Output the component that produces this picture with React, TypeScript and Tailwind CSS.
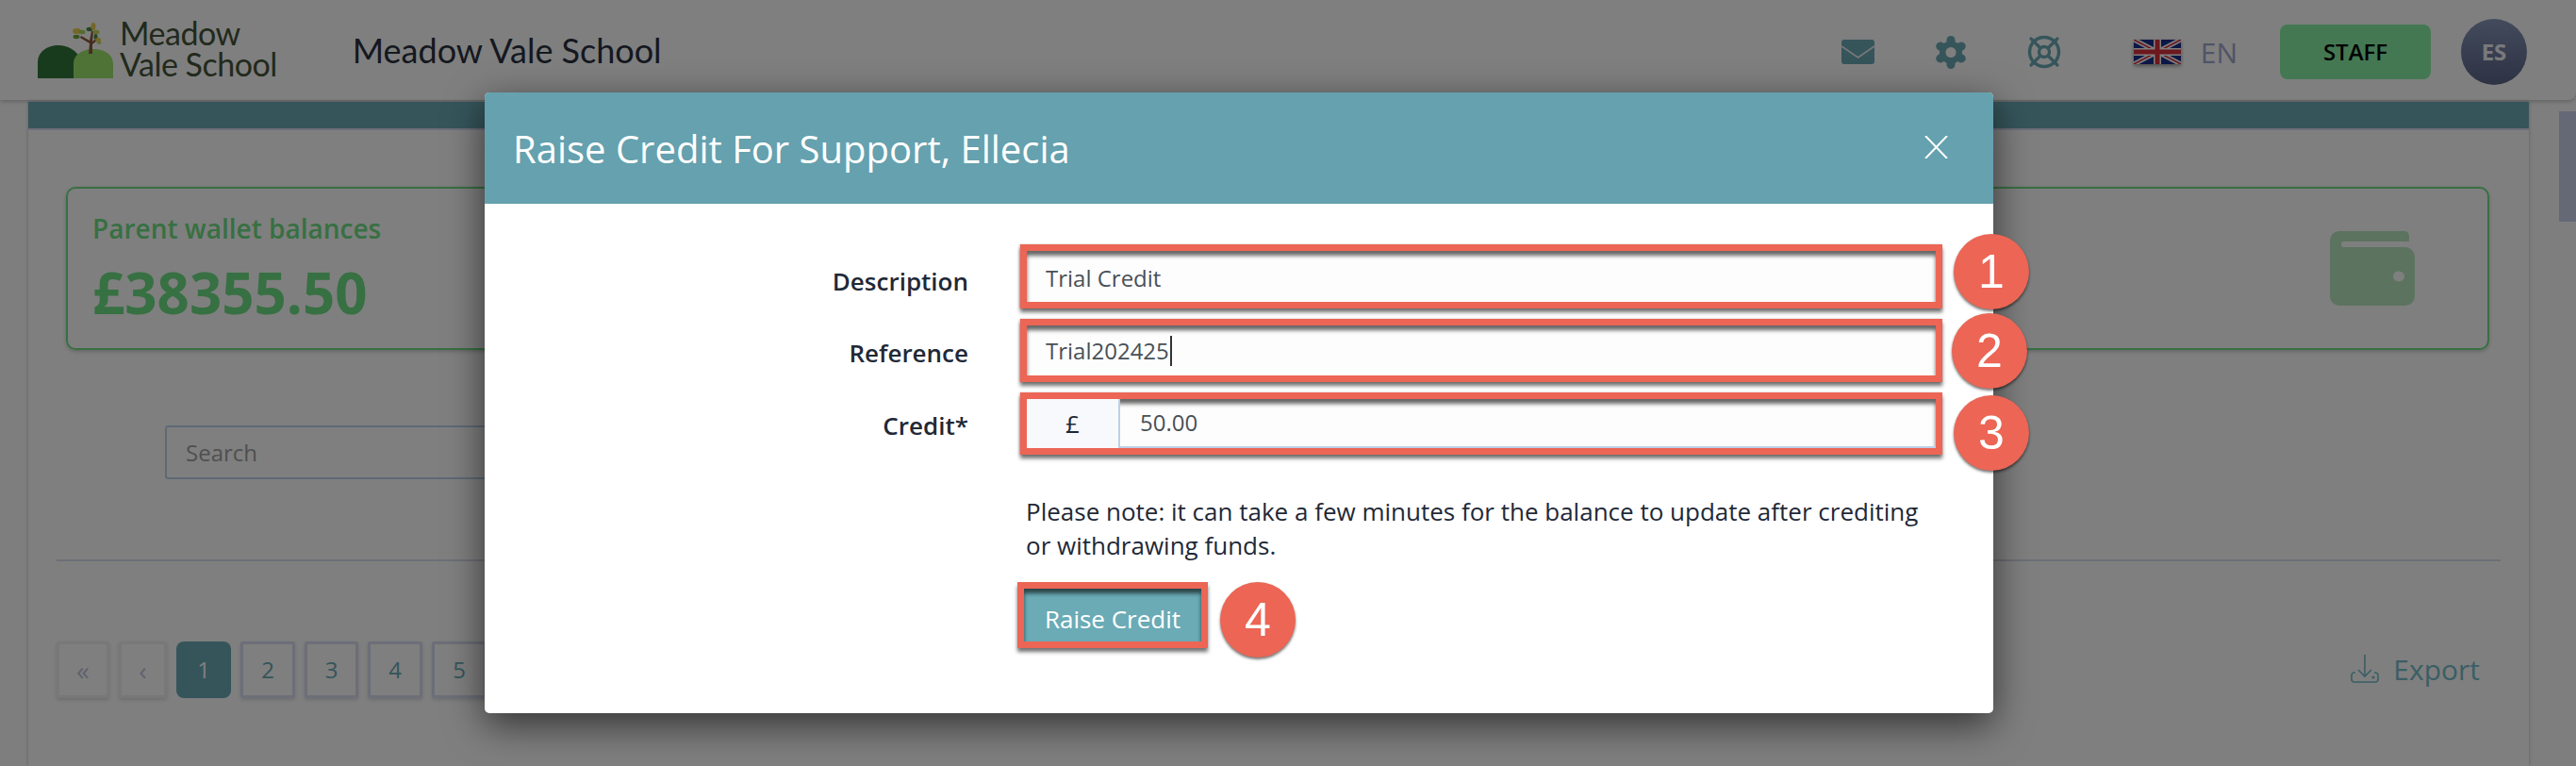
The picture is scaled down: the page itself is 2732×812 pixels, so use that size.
import React from "react";

function Logo() {
  return (
    <svg width="80" height="61" viewBox="0 0 80 61" className="mt-[22px] shrink-0 self-start">
      <path d="M0 61 V44 C0 33 10 26 22 26 C32 26 40 31 44 38 L44 61 Z" fill="#33773a" />
      <path d="M38 61 V45 C38 36 48 30 59 30 C71 30 80 36 80 46 V61 Z" fill="#9fe56f" />
      <path d="M54 35 L55 24 L45 18 L46 16 L55 21 L57 11 L59 11 L58 22 L63 18 L64 20 L58 25 L58 35 Z" fill="#8a5a3a" />
      <ellipse cx="41.5" cy="11" rx="4.5" ry="3" fill="#e8cf4e" />
      <ellipse cx="47" cy="12" rx="3.5" ry="2.2" fill="#a8d85a" />
      <ellipse cx="41" cy="17" rx="3.5" ry="2.2" fill="#6ea83e" />
      <ellipse cx="55" cy="9" rx="3.5" ry="2.2" fill="#4a8a4a" />
      <ellipse cx="59" cy="6" rx="2.5" ry="4" fill="#e8cf4e" />
      <ellipse cx="62" cy="12" rx="3.5" ry="2.2" fill="#c9d860" />
      <ellipse cx="61.5" cy="17" rx="2" ry="3" fill="#4a8a4a" />
      <ellipse cx="64" cy="20" rx="3" ry="2" fill="#e8cf4e" />
      <ellipse cx="65" cy="23" rx="2.5" ry="2" fill="#c9d860" />
    </svg>
  );
}

function Flag() {
  return (
    <svg width="50" height="26" viewBox="0 0 50 26" className="drop-shadow-[0_2px_2px_rgba(0,0,0,0.4)]">
      <rect width="50" height="26" fill="#1a2f8c" />
      <path d="M0 0 L50 26 M50 0 L0 26" stroke="#ffffff" strokeWidth="5" />
      <path d="M0 0 L50 26 M50 0 L0 26" stroke="#d8303c" strokeWidth="1.6" />
      <path d="M25 0 V26 M0 13 H50" stroke="#ffffff" strokeWidth="8" />
      <path d="M25 0 V26 M0 13 H50" stroke="#d8303c" strokeWidth="5" />
    </svg>
  );
}

function Envelope() {
  return (
    <svg width="35" height="26" viewBox="0 0 35 26">
      <rect width="35" height="26" rx="3" fill="#6aaab6" />
      <path d="M0 7 L17.5 19 L35 7" fill="none" stroke="#f0f0f0" strokeWidth="1.8" />
    </svg>
  );
}

function Gear() {
  return (
    <svg width="34" height="35" viewBox="0 0 34 35">
      <circle cx="17" cy="17.5" r="12" fill="#6aaab6" />
      <g stroke="#6aaab6" strokeWidth="9" strokeLinecap="round">
        <path d="M17 17.5 V4.5" />
        <path d="M17 17.5 V30.5" />
        <path d="M17 17.5 L28.2 11" />
        <path d="M17 17.5 L5.8 24" />
        <path d="M17 17.5 L28.2 24" />
        <path d="M17 17.5 L5.8 11" />
      </g>
      <circle cx="17" cy="17.5" r="5.5" fill="#ffffff" />
    </svg>
  );
}

function LifeRing() {
  return (
    <svg width="36" height="36" viewBox="0 0 36 36" fill="none" stroke="#6aaab6">
      <circle cx="18" cy="18" r="15.5" strokeWidth="3.4" />
      <path d="M4 4 L32 32 M32 4 L4 32" strokeWidth="3.2" strokeLinecap="round" />
      <circle cx="18" cy="18" r="5.5" fill="#ffffff" strokeWidth="3.4" />
    </svg>
  );
}

function Wallet() {
  return (
    <svg width="90" height="79" viewBox="0 0 90 79">
      <path
        d="M10 0 H79 a5 5 0 0 1 5 5 V11 H15 a3 3 0 0 0 0 6 H80 a10 10 0 0 1 10 10 V69 a10 10 0 0 1 -10 10 H10 a10 10 0 0 1 -10 -10 V10 a10 10 0 0 1 10 -10 Z"
        fill="#b8e6bf"
      />
      <ellipse cx="73" cy="48" rx="6" ry="5.5" fill="#ffffff" />
    </svg>
  );
}

function ExportIcon() {
  return (
    <svg width="30" height="30" viewBox="0 0 30 30" fill="none" stroke="#76bcc9" strokeWidth="1.6">
      <path d="M15 0 V23" />
      <path d="M8 16 L15 23 L22 16" />
      <path d="M5 19 H4 a3 3 0 0 0 -3 3 V26 a3 3 0 0 0 3 3 H26 a3 3 0 0 0 3 -3 V22 a3 3 0 0 0 -3 -3 H25" />
      <circle cx="24" cy="24" r="0.8" />
    </svg>
  );
}

function Badge({ n, className }: { n: string; className: string }) {
  return (
    <div
      className={
        "absolute flex h-20 w-20 items-center justify-center rounded-full bg-[#ec6555] font-['Liberation_Sans',sans-serif] text-[50px] leading-none text-white shadow-[0_2px_3px_rgba(0,0,0,0.55)] " +
        className
      }
    >
      {n}
    </div>
  );
}

const boxShadow =
  "shadow-[0_4px_4px_rgba(0,0,0,0.55),inset_0_5px_4px_rgba(0,0,0,0.6),-1px_0_2px_rgba(0,0,0,0.2)]";

function Field({
  label,
  labelClass,
  heightClass,
  badge,
  badgeClass,
  children,
}: {
  label: string;
  labelClass: string;
  heightClass: string;
  badge: string;
  badgeClass: string;
  children: React.ReactNode;
}) {
  return (
    <div className="flex items-center">
      <div className={"w-[513px] text-right text-[26px] font-semibold text-[#1f2937] " + labelClass}>{label}</div>
      <div className={"relative ml-[55px] w-[978px] " + heightClass}>
        <div className={"flex h-full items-stretch border-[7px] border-[#ec6555] bg-[#fdfdfd] text-[24px] text-[#495057] " + boxShadow}>
          {children}
        </div>
        <Badge n={badge} className={badgeClass} />
      </div>
    </div>
  );
}

function PageBtn({ children, active, muted, w }: { children: React.ReactNode; active?: boolean; muted?: boolean; w: string }) {
  const look = active
    ? "rounded-lg bg-[#6aaab6] text-white text-[24px]"
    : muted
      ? "rounded-[2px] border-[3px] border-[#f0f0f0] text-[#c0c4dc] text-[28px] shadow-[0_2px_4px_rgba(0,0,0,0.15)]"
      : "rounded-[2px] border-[3px] border-[#d8dcf0] text-[#6aaab6] text-[24px] shadow-[0_2px_4px_rgba(0,0,0,0.15)]";
  return <div className={"flex h-[60px] shrink-0 items-center justify-center " + w + " " + look}>{children}</div>;
}

export default function App() {
  return (
    <div className="relative h-[812px] w-[2732px] overflow-hidden bg-[#fdfdfd] font-['Open_Sans',sans-serif]">
      <header className="flex h-[106px] items-center rounded-br-lg bg-white pl-[40px] pr-[52px] font-['Lato',sans-serif] shadow-[0_2px_4px_rgba(0,0,0,0.2)]">
        <div className="flex self-stretch">
          <Logo />
          <div className="ml-[7px] mt-[18px] self-start text-[34px] leading-[33px] tracking-[-0.5px] text-[#445438]">
            <div>Meadow</div>
            <div>Vale School</div>
          </div>
        </div>
        <div className="ml-[80px] text-[36px] text-[#2a303e]">Meadow Vale School</div>
        <div className="ml-auto mt-[4px] flex items-center">
          <Envelope />
          <div className="ml-[64px]">
            <Gear />
          </div>
          <div className="ml-[64px]">
            <LifeRing />
          </div>
          <div className="ml-[77px]">
            <Flag />
          </div>
          <span className="ml-[21px] font-['Open_Sans',sans-serif] text-[30px] text-[#a0a8cc]">EN</span>
          <div className="ml-[45px] flex h-[58px] w-[160px] items-center justify-center rounded-lg bg-[#88f0a4] font-['Open_Sans',sans-serif] text-[24px] font-semibold text-black">
            STAFF
          </div>
          <div className="ml-[32px] flex h-[70px] w-[70px] items-center justify-center rounded-full bg-gradient-to-b from-[#8696ba] to-[#5c6688] font-['Open_Sans',sans-serif] text-[24px] font-bold text-[#f0f2f8]">
            ES
          </div>
        </div>
      </header>

      <div className="mt-[2px] flex">
        <main className="ml-[30px] h-[704px] w-[2652px] bg-white shadow-[0_0_4px_rgba(0,0,0,0.25)]">
          <div className="h-[28px] bg-[#6aaab6]" />
          <div className="h-[2px] bg-[#d8dcf0]" />
          <div className="px-[30px] pt-[60px]">
            <div className="ml-[10px] mr-[12px] flex h-[173px] items-center justify-between rounded-[10px] border-[2px] border-[#6ee084] pl-[26px] pr-[77px] shadow-[0_2px_4px_rgba(0,0,0,0.2)]">
              <div className="pt-[4px]">
                <div className="text-[28px] font-semibold leading-[36px] text-[#6ee084]">Parent wallet balances</div>
                <div className="mt-[10px] text-[60px] font-bold leading-[80px] text-[#6ee084]">£38355.50</div>
              </div>
              <Wallet />
            </div>
            <div className="ml-[115px] mt-[80px] flex h-[57px] w-[600px] items-center rounded-[3px] border-[2px] border-[#bdd2ec] pl-[20px] text-[24px] text-[#a0a0a0]">
              Search
            </div>
            <div className="mt-[85px] h-[2px] bg-[#d8dcf0]" />
            <div className="mt-[85px] flex items-center justify-between">
              <div className="flex gap-[10px]">
                <PageBtn muted w="w-[56px]">«</PageBtn>
                <PageBtn muted w="w-[51px]">‹</PageBtn>
                <PageBtn active w="w-[58px]">1</PageBtn>
                <PageBtn w="w-[58px]">2</PageBtn>
                <PageBtn w="w-[57px]">3</PageBtn>
                <PageBtn w="w-[58px]">4</PageBtn>
                <PageBtn w="w-[58px]">5</PageBtn>
              </div>
              <div className="mb-[2px] mr-[22px] flex items-center gap-[15px] text-[30px] text-[#76bcc9]">
                <ExportIcon />
                <span>Export</span>
              </div>
            </div>
          </div>
        </main>
        <aside className="ml-[32px] w-[18px] pt-[10px]">
          <div className="h-[117px] bg-[#cad0ea]" />
        </aside>
      </div>

      <div className="absolute inset-0 bg-black/50" />

      <div className="absolute left-[514px] top-[98px] h-[658px] w-[1600px] rounded-[5px] bg-white shadow-[0_12px_40px_rgba(0,0,0,0.6)]">
        <div className="flex h-[118px] items-center justify-between rounded-t-[5px] bg-[#65a1ae] pl-[30px] pr-[48px]">
          <div className="pt-[2px] text-[40px] text-white">Raise Credit For Support, Ellecia</div>
          <svg width="25" height="24" viewBox="0 0 25 24" stroke="#ffffff" strokeWidth="2" fill="none" className="mb-[2px]">
            <path d="M1 0 L24 24 M24 0 L1 24" />
          </svg>
        </div>
        <div className="pt-[43px]">
          <div className="flex flex-col gap-[11px]">
            <Field label="Description" labelClass="pt-[11px]" heightClass="h-[68px]" badge="1" badgeClass="left-[990px] top-[-11px]">
              <div className="flex items-center pt-[4px] pl-[20px]">Trial Credit</div>
            </Field>
            <Field label="Reference" labelClass="pt-[6px]" heightClass="h-[67px]" badge="2" badgeClass="left-[988px] top-[-6px]">
              <div className="flex items-center pt-[1px] pl-[20px]">
                Trial202425
                <span className="ml-px inline-block h-[32px] w-[2px] bg-[#333]" />
              </div>
            </Field>
            <Field label="Credit*" labelClass="pt-[4px]" heightClass="h-[66px]" badge="3" badgeClass="left-[990px] top-[3px]">
              <div className="flex w-[99px] items-center justify-center border-r-[2px] border-[#bcd0e8] bg-[#f7f9fc] text-[26px] text-[#1f2937]">£</div>
              <div className="flex flex-1 items-center border-b-[2px] border-[#bcd0e8] pl-[21px]">50.00</div>
            </Field>
          </div>
          <p className="ml-[574px] mt-[42px] w-[960px] text-[26px] leading-[36px] text-[#1f2937]">
            Please note: it can take a few minutes for the balance to update after crediting or withdrawing funds.
          </p>
          <div className="relative ml-[565px] mt-[21px] w-[202px]">
            <div className="flex h-[70px] items-center justify-center border-[7px] border-[#ec6555] bg-[#6aabb6] pt-[8px] text-[26px] text-white shadow-[0_4px_4px_rgba(0,0,0,0.55),inset_0_5px_4px_rgba(0,0,0,0.6)]">
              Raise Credit
            </div>
            <Badge n="4" className="left-[215px] top-[0px]" />
          </div>
        </div>
      </div>
    </div>
  );
}
